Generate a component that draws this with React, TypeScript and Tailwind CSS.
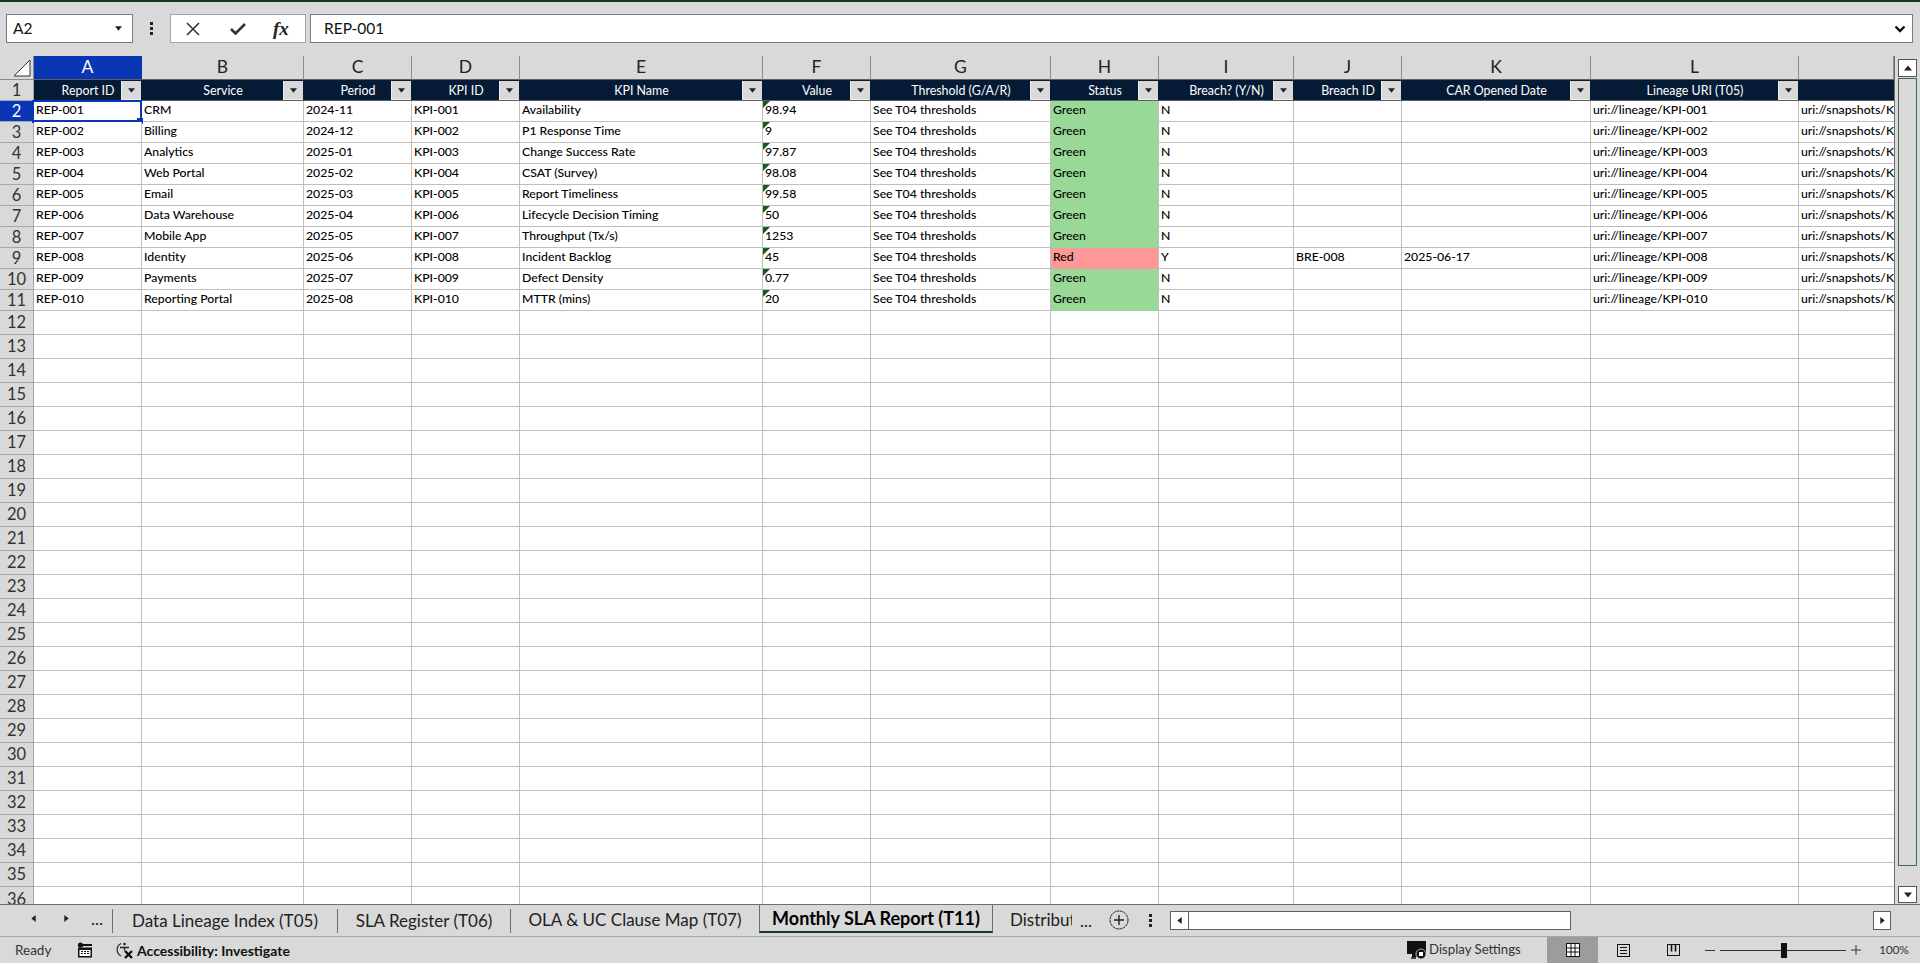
import React from "react";

const cols = ["A","B","C","D","E","F","G","H","I","J","K","L",""];
const heads = ["Report ID","Service","Period","KPI ID","KPI Name","Value","Threshold (G/A/R)","Status","Breach? (Y/N)","Breach ID","CAR Opened Date","Lineage URI (T05)",""];
const data: string[][] = [
  ["CRM","2024-11","Availability","98.94"],
  ["Billing","2024-12","P1 Response Time","9"],
  ["Analytics","2025-01","Change Success Rate","97.87"],
  ["Web Portal","2025-02","CSAT (Survey)","98.08"],
  ["Email","2025-03","Report Timeliness","99.58"],
  ["Data Warehouse","2025-04","Lifecycle Decision Timing","50"],
  ["Mobile App","2025-05","Throughput (Tx/s)","1253"],
  ["Identity","2025-06","Incident Backlog","45"],
  ["Payments","2025-07","Defect Density","0.77"],
  ["Reporting Portal","2025-08","MTTR (mins)","20"],
];

const cell = "min-w-0 overflow-hidden whitespace-nowrap border-r border-b border-[#bfbfbf] pl-[2px] pb-[2px] flex items-center text-[12.25px] font-medium text-black relative bg-white";
const rowHead = "flex items-center justify-center border-r border-b border-[#a6a6a6] bg-[#d9d9d9] text-[16.5px] text-[#333333]";
const rowHeadOn = "flex items-center justify-center border-r border-b border-[#a6a6a6] bg-[#0a35b5] text-[16.5px] text-white";

function Tri({ dir = "down", size = 6 }: { dir?: "down" | "up" | "left" | "right"; size?: number }) {
  const pts = { down: "0,1 8,1 4,6", up: "0,6 8,6 4,1", left: "6,0 6,8 1,4", right: "1,0 1,8 6,4" }[dir];
  return (
    <svg width={size} height={size} viewBox={dir === "left" || dir === "right" ? "0 0 7 8" : "0 0 8 7"} className="shrink-0">
      <polygon points={pts} fill="#222" />
    </svg>
  );
}

function FilterBtn() {
  return (
    <span className="absolute right-[1px] top-[1px] flex h-[19px] w-[20px] items-center justify-center border-l border-b border-[#eeeeee] bg-[#d9d9d9]">
      <Tri size={7} />
    </span>
  );
}

function DataRow({ i, d }: { i: number; d: string[] }) {
  const n = String(i + 1).padStart(3, "0");
  const red = d[3] === "45";
  return (
    <>
      <div className={i === 0 ? rowHeadOn : rowHead}>{i + 2}</div>
      <div className={cell + " !overflow-visible z-10"}>
        REP-{n}
        {i === 0 && (
          <>
            <span className="pointer-events-none absolute -left-[2px] -top-[1px] -right-[1px] -bottom-[2px] border-2 border-b-[3px] border-[#0a35b5]" />
            <span className="absolute -right-[2px] -bottom-[3px] h-[6px] w-[6px] bg-[#0a35b5]" />
          </>
        )}
      </div>
      <div className={cell}>{d[0]}</div>
      <div className={cell}>{d[1]}</div>
      <div className={cell}>KPI-{n}</div>
      <div className={cell}>{d[2]}</div>
      <div className={cell}>
        <span className="absolute left-0 top-0 h-[7px] w-[7px] bg-[#17591f] [clip-path:polygon(0_0,100%_0,0_100%)]" />
        {d[3]}
      </div>
      <div className={cell}>See T04 thresholds</div>
      {red ? (
        <div className={cell + " !bg-[#ff9999] !border-b-[#ff9999]"}>Red</div>
      ) : (
        <div className={cell + " !bg-[#98d998] !border-b-[#98d998]"}>Green</div>
      )}
      <div className={cell}>{red ? "Y" : "N"}</div>
      <div className={cell}>{red ? "BRE-008" : ""}</div>
      <div className={cell}>{red ? "2025-06-17" : ""}</div>
      <div className={cell}>uri://lineage/KPI-{n}</div>
      <div className={cell + " !border-r-0"}>uri://snapshots/KPI-{n}</div>
    </>
  );
}

function EmptyRow({ n, clip }: { n: number; clip?: boolean }) {
  return (
    <>
      <div className={rowHead + (clip ? " !border-b-0 overflow-hidden !items-start" : "")}>{n}</div>
      {cols.map((_, c) => (
        <div key={c} className={cell + (clip ? " !border-b-0" : "") + (c === 12 ? " !border-r-0" : "")} />
      ))}
    </>
  );
}

function Sheet() {
  return (
    <div className="grid w-[1894px] shrink-0 grid-cols-[34px_108px_162px_108px_108px_243px_108px_180px_108px_135px_108px_189px_208px_95px] grid-rows-[24px_repeat(11,21px)_repeat(24,24px)_17px] overflow-hidden">
      <div className="flex items-end justify-end border-r border-b border-[#8c8c8c] pr-[2px] pb-[2px]">
        <svg width="18" height="18" viewBox="0 0 18 18"><polygon points="17,1 17,17 1,17" fill="#fff" stroke="#333" strokeWidth="1" /></svg>
      </div>
      {cols.map((c, i) => (
        <div
          key={i}
          className={
            i === 0
              ? "flex items-center justify-center border-r border-b border-[#0a35b5] border-b-[#5f5f5f] bg-[#0a35b5] text-[17.5px] text-white"
              : "flex items-center justify-center border-r border-b border-[#8c8c8c] border-b-[#5f5f5f] bg-[#d9d9d9] text-[17.5px] text-[#222222]"
          }
        >
          {c}
        </div>
      ))}
      <div className={rowHead}>1</div>
      {heads.map((h, i) => (
        <div key={i} className="relative flex items-center justify-center whitespace-nowrap border-b border-[#5f5f5f] bg-[#051a35] pt-[2px] text-[12.4px] text-white">
          {h}
          {h && <FilterBtn />}
        </div>
      ))}
      {data.map((d, i) => (
        <DataRow key={i} i={i} d={d} />
      ))}
      {Array.from({ length: 24 }, (_, k) => (
        <EmptyRow key={k} n={k + 12} />
      ))}
      <EmptyRow n={36} clip />
    </div>
  );
}

function VScroll() {
  return (
    <div className="flex w-[26px] flex-col items-center border-l border-[#6e6e6e] pt-[3px]">
      <div className="flex h-[18px] w-[19px] items-center justify-center border border-[#555555] bg-white"><Tri dir="up" size={8} /></div>
      <div className="mt-[1px] h-[788px] w-[19px] border border-[#3f6b4c] bg-[#d9d9d9]" />
      <div className="mt-auto mb-[1px] flex h-[17px] w-[19px] items-center justify-center border border-[#555555] bg-white"><Tri dir="down" size={8} /></div>
    </div>
  );
}

function FormulaBar() {
  return (
    <div className="flex h-[29px] items-stretch pl-[6px] pr-[7px]">
      <div className="flex w-[127px] items-center border border-[#7a7a7a] bg-white pl-[6px] pr-[10px] text-[15.5px] text-[#111]">
        <span className="flex-1">A2</span>
        <Tri size={7} />
      </div>
      <div className="flex w-[37px] flex-col items-center justify-center gap-[2px]">
        <span className="h-[3px] w-[3px] bg-[#222]" />
        <span className="h-[3px] w-[3px] bg-[#222]" />
        <span className="h-[3px] w-[3px] bg-[#222]" />
      </div>
      <div className="flex w-[136px] items-center border border-[#a6a6a6] bg-white">
        <span className="ml-[14px] flex w-[16px] justify-center">
          <svg width="14" height="14" viewBox="0 0 14 14"><path d="M1 1L13 13M13 1L1 13" stroke="#333" strokeWidth="1.6" fill="none" /></svg>
        </span>
        <span className="ml-[29px] flex w-[16px] justify-center">
          <svg width="16" height="13" viewBox="0 0 16 13"><path d="M1 7l4.5 4.5L15 2" stroke="#333" strokeWidth="2.6" fill="none" /></svg>
        </span>
        <span className="ml-[27px] text-[19px] font-bold italic leading-none text-[#222] [font-family:'Liberation_Serif',serif]">fx</span>
      </div>
      <div className="ml-[4px] flex flex-1 items-center border border-[#7a7a7a] bg-white pl-[13px] pr-[6px] text-[15.5px] text-[#111]">
        <span className="flex-1">REP-001</span>
        <svg width="12" height="8" viewBox="0 0 12 8"><path d="M1.5 1.5L6 6l4.5-4.5" stroke="#111" strokeWidth="2.4" fill="none" /></svg>
      </div>
    </div>
  );
}

function TabBar() {
  const sep = "h-[24px] w-px bg-[#6e6e6e] shrink-0";
  return (
    <div className="flex h-[33px] items-start border-t border-[#6e6e6e] text-[17px] text-[#222222]">
      <div className="flex h-[27px] w-[112px] shrink-0 items-center pl-[30px]">
        <Tri dir="left" size={7} />
        <span className="ml-[26px]"><Tri dir="right" size={7} /></span>
        <span className="ml-[21px] leading-none">...</span>
      </div>
      <div className="mt-[3px] flex shrink-0 items-center">
        <span className={sep} />
        <span className="flex w-[224px] justify-center whitespace-nowrap">Data Lineage Index (T05)</span>
        <span className={sep} />
        <span className="flex w-[172px] justify-center whitespace-nowrap">SLA Register (T06)</span>
        <span className={sep} />
      </div>
      <span className="mt-[3px] flex h-[24px] w-[248px] shrink-0 items-center justify-center whitespace-nowrap">OLA &amp; UC Clause Map (T07)</span>
      <span className="-mt-px flex h-[29px] w-[234px] shrink-0 items-center justify-center whitespace-nowrap border-x border-t border-[#6e6e6e] border-b-2 border-b-[#0f3d1e] text-[18px] font-bold text-black">Monthly SLA Report (T11)</span>
      <div className="mt-[3px] flex h-[24px] items-center">
        <span className="ml-[17px] w-[62px] overflow-hidden whitespace-nowrap">Distribut</span>
        <span className="ml-[8px] w-[14px] leading-none">...</span>
        <svg className="ml-[15px]" width="20" height="20" viewBox="0 0 20 20"><circle cx="10" cy="10" r="9" fill="none" stroke="#222" strokeWidth="1" strokeDasharray="3 0.6" /><path d="M10 5v10M5 10h10" stroke="#222" strokeWidth="1.4" /></svg>
        <span className="ml-[20px] flex flex-col gap-[2px]">
          <span className="h-[3px] w-[3px] bg-[#222]" />
          <span className="h-[3px] w-[3px] bg-[#222]" />
          <span className="h-[3px] w-[3px] bg-[#222]" />
        </span>
      </div>
      <div className="ml-[18px] mt-[6px] flex h-[19px] w-[401px] border border-[#5f5f5f] bg-white">
        <span className="flex w-[18px] items-center justify-center border-r border-[#5f5f5f]"><Tri dir="left" size={7} /></span>
      </div>
      <div className="ml-[302px] mt-[6px] flex h-[19px] w-[18px] items-center justify-center border border-[#5f5f5f] bg-white"><Tri dir="right" size={7} /></div>
    </div>
  );
}

function StatusBar() {
  return (
    <div className="flex h-[27px] items-center border-t border-[#a6a6a6] text-[13.5px] text-[#333333]">
      <span className="ml-[15px] w-[62px] shrink-0">Ready</span>
      <svg width="16" height="16" viewBox="0 0 16 16" className="shrink-0">
        <circle cx="3.5" cy="3" r="2.6" fill="#111" />
        <path d="M6 2h9v2H6zM1 5.500h14v10H1z" fill="#111" />
        <path d="M2.500 8h11v6h-11z" fill="#fff" />
        <path d="M4 9h2v1H4zM7 9h2v1H7zM10 9h2v1h-2zM4 11h2v1H4zM7 11h2v1H7zM10 11h2v1h-2z" fill="#111" />
      </svg>
      <svg className="ml-[22px] shrink-0" width="20" height="18" viewBox="0 0 20 18">
        <path d="M6 2.500A7 7 0 0 0 6 15" fill="none" stroke="#222" strokeWidth="1.2" />
        <circle cx="9.500" cy="3" r="1.300" fill="#222" />
        <path d="M5 6.500h9M9.500 6.500v3" stroke="#222" strokeWidth="1.3" />
        <path d="M10 10l7 7M17 10l-7 7" stroke="#111" strokeWidth="2.400" />
      </svg>
      <span className="ml-[2px] w-[152px] shrink-0 whitespace-nowrap text-[14px] font-bold text-[#111]">Accessibility: Investigate</span>
      <svg className="ml-[1118px] shrink-0" width="20" height="19" viewBox="0 0 20 19">
        <path d="M0 0h19v13h-6v3H5v-3H0z" fill="#111" />
        <path d="M4 17h5" stroke="#111" strokeWidth="1.500" />
        <circle cx="14" cy="13" r="5" fill="#111" stroke="#d9d9d9" strokeWidth="0.800" />
        <rect x="12" y="11" width="4" height="4" fill="#fff" />
      </svg>
      <span className="ml-[2px] w-[118px] shrink-0 whitespace-nowrap text-[13.2px]">Display Settings</span>
      <span className="flex h-full w-[51px] shrink-0 items-center justify-center bg-[#9c9c9c]">
        <svg width="14" height="14" viewBox="0 0 14 14"><rect x="0.500" y="0.500" width="13" height="13" fill="#fff" stroke="#111" /><path d="M0 5h14M0 9h14M5 0v14M9 0v14" stroke="#111" /></svg>
      </span>
      <span className="flex w-[50px] shrink-0 justify-center">
        <svg width="13" height="13" viewBox="0 0 13 13"><rect x="0.500" y="0.500" width="12" height="12" fill="none" stroke="#111" /><path d="M3 3.500h7M3 6.500h7M3 9.500h7" stroke="#111" /></svg>
      </span>
      <span className="flex w-[50px] shrink-0 justify-center">
        <svg width="13" height="13" viewBox="0 0 13 13"><rect x="0.500" y="0.500" width="12" height="11" fill="none" stroke="#111" /><path d="M4.500 0v7.500M8.500 0v7.500" stroke="#111" strokeWidth="1.600" /></svg>
      </span>
      <span className="ml-[7px] h-px w-[10px] shrink-0 bg-[#333]" />
      <span className="relative ml-[5px] h-px w-[126px] shrink-0 bg-[#333]">
        <span className="absolute left-[61px] -top-[7px] h-[15px] w-[6px] bg-[#111]" />
      </span>
      <svg className="ml-[5px] shrink-0" width="10" height="10" viewBox="0 0 10 10"><path d="M0 5h10M5 0v10" stroke="#333" strokeWidth="1" /></svg>
      <span className="ml-[18px] shrink-0 text-[12px] tracking-[-0.2px]">100%</span>
    </div>
  );
}

export default function App() {
  return (
    <div className="flex h-[964px] w-[1920px] flex-col overflow-hidden bg-[#d9d9d9] [font-family:Lato,'Liberation_Sans',sans-serif]">
      <div className="h-[2px] shrink-0 bg-[#0f3d1e]" />
      <div className="mt-[12px] shrink-0"><FormulaBar /></div>
      <div className="mt-[13px] flex h-[848px] shrink-0 overflow-hidden">
        <Sheet />
        <VScroll />
      </div>
      <TabBar />
      <StatusBar />
      <div className="h-px bg-white" />
    </div>
  );
}
